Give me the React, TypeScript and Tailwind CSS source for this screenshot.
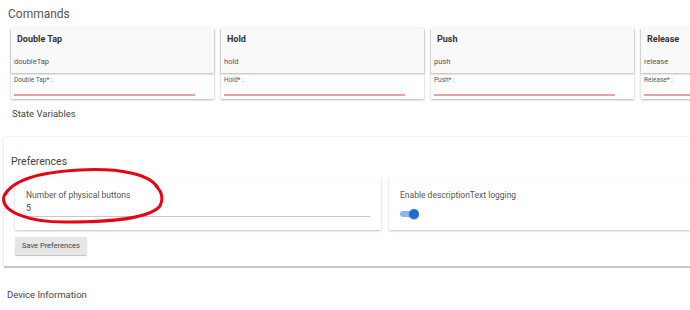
import React from "react";

const commands = [
  { title: "Double Tap", value: "doubleTap", label: "Double Tap* :" },
  { title: "Hold", value: "hold", label: "Hold* :" },
  { title: "Push", value: "push", label: "Push* :" },
  { title: "Release", value: "release", label: "Release* :" },
];

function CommandCard({ title, value, label }: { title: string; value: string; label: string }) {
  return (
    <div className="w-[203px] shrink-0 bg-white shadow-[0_1px_2px_rgba(0,0,0,0.3)]">
      <div className="h-[45px] bg-[#f9f9f9] shadow-[0_1px_2px_rgba(0,0,0,0.3)] flex flex-col">
        <div className="pl-[6px] pt-[5px] text-[9px] font-bold text-[#333]">{title}</div>
        <div className="pl-[3px] mt-auto pb-[6px] text-[7.5px] text-[#555]">{value}</div>
      </div>
      <div className="h-[26px] pl-[3px] pt-[3px] flex flex-col">
        <div className="text-[6.5px] text-[#555]">{label}</div>
        <div className="mt-auto mb-[3px] h-[2px] w-[181px] bg-[#eba0a6]" />
      </div>
    </div>
  );
}

export default function App() {
  return (
    <main
      className="relative w-[690px] h-[310px] overflow-hidden bg-white"
      style={{ fontFamily: "Roboto, 'Liberation Sans', sans-serif" }}
    >
      <h2 className="pl-[8px] pt-[6px] text-[12px] leading-[16px] text-[#555]">Commands</h2>

      <div className="flex gap-[7px] pl-[11px] mt-[6px]">
        {commands.map((c) => (
          <CommandCard key={c.title} {...c} />
        ))}
      </div>

      <div className="pl-[12px] mt-[9px] text-[9.5px] leading-[12px] text-[#444]">State Variables</div>

      <section className="ml-[4px] mt-[17px] h-[129px] bg-white shadow-[0_0_2px_rgba(0,0,0,0.12),0_2px_1px_rgba(0,0,0,0.2)] pt-[18px]">
        <h3 className="pl-[7px] text-[10.5px] leading-[14px] text-[#444]">Preferences</h3>

        <div className="flex gap-[8px] mt-[9px] pl-[11px]">
          <div className="w-[366px] h-[52px] bg-white shadow-[0_1px_2px_rgba(0,0,0,0.25)] pl-[11px] pt-[12px]">
            <div className="text-[8.5px] leading-[11px] text-[#555]">Number of physical buttons</div>
            <div className="text-[9px] leading-[12px] text-[#444] mt-[1px]">5</div>
            <div className="mt-[2px] h-px w-[344px] bg-[#c8c8c8]" />
          </div>
          <div className="flex-1 h-[52px] bg-white shadow-[0_1px_2px_rgba(0,0,0,0.25)] pl-[11px] pt-[12px]">
            <div className="text-[8.5px] leading-[11px] text-[#555]">Enable descriptionText logging</div>
            <div className="relative mt-[8px] w-[19px] h-[10px]">
              <div className="absolute left-0 top-[2px] w-[15px] h-[6px] rounded-full bg-[#8cb8e8]" />
              <div className="absolute right-0 top-0 w-[10px] h-[10px] rounded-full bg-[#1a6fcc] shadow-[0_1px_1px_rgba(0,0,0,0.3)]" />
            </div>
          </div>
        </div>

        <button className="ml-[11px] mt-[7px] w-[72px] h-[18px] bg-[#e6e6e6] shadow-[0_1px_1px_rgba(0,0,0,0.25)] text-[7.5px] text-[#444] rounded-[1px]">
          Save Preferences
        </button>
      </section>

      <div className="pl-[7px] mt-[23px] text-[9.5px] leading-[12px] text-[#444]">Device Information</div>

      <svg
        className="absolute left-0 top-0 pointer-events-none"
        width="690"
        height="310"
        viewBox="0 0 690 310"
      >
        <path
          d="M158 188 C150 174 120 168 80 170 C40 172 12 180 4 196 C0 212 30 223 70 222 C110 222 150 218 160 206 C164 198 162 192 156 186"
          fill="none"
          stroke="#e30613"
          strokeWidth="3"
          strokeLinecap="round"
        />
      </svg>
    </main>
  );
}
